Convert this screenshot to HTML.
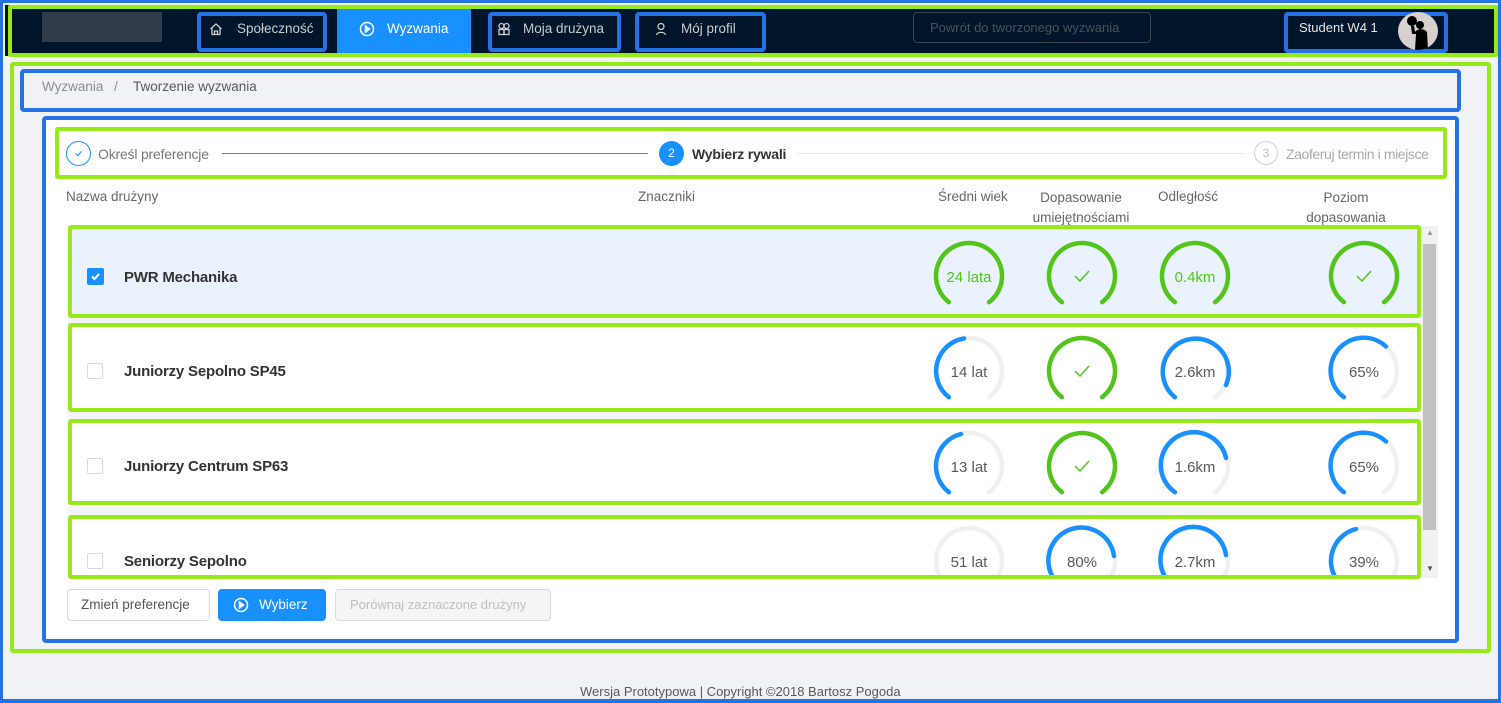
<!DOCTYPE html>
<html><head><meta charset="utf-8">
<style>
*{box-sizing:border-box;margin:0;padding:0}
body{width:1501px;height:703px;overflow:hidden;background:#f0f2f5;font-family:"Liberation Sans",sans-serif;font-size:13.5px;color:#595959;position:relative}
.a{position:absolute}
.g{position:absolute;border:4px solid #97ea1a;border-radius:3px}
.b{position:absolute;border:4px solid #2472e6;border-radius:4px}
.t{position:absolute;white-space:nowrap}
.nav{color:#c9ccd1;font-size:13.5px}
.row{position:absolute;left:68px;width:1354px;background:#fff}
.cb{position:absolute;left:87px;width:16px;height:16px;border:1px solid #d9d9d9;border-radius:2px;background:#fff}
.nm{position:absolute;left:124px;font-weight:bold;font-size:15px;color:#333;letter-spacing:-0.2px}
</style></head><body>
<div class="a" style="left:0;top:0;width:1501px;height:703px;border:3px solid #2472e6"></div>
<div class="a" style="left:5px;top:5px;width:1490px;height:51px;background:#001529"></div>
<div class="a" style="left:42px;top:12px;width:120px;height:30px;background:#303c4a"></div>
<div class="a" style="left:337px;top:5px;width:134px;height:51px;background:#1890ff"></div>
<div class="b" style="left:197px;top:12px;width:130px;height:40px"></div>
<div class="b" style="left:488px;top:12px;width:133px;height:40px"></div>
<div class="b" style="left:635px;top:12px;width:131px;height:40px"></div>
<svg class="a" style="left:209px;top:22px" width="14" height="14" viewBox="0 0 14 14" fill="none" stroke="#c9ccd1" stroke-width="1.3"><path d="M1.5 7 L7 2 L12.5 7 M3 6 V12.5 H11 V6 M5.5 12.5 V9 H8.5 V12.5"/></svg>
<div class="t nav" style="left:237px;top:21px">Społeczność</div>
<svg class="a" style="left:359px;top:21px" width="16" height="16" viewBox="0 0 16 16" fill="none" stroke="#fff" stroke-width="1.5"><circle cx="8" cy="8" r="6.5"/><path d="M6.5 5 L10.5 8 L6.5 11 Z" fill="#fff"/></svg>
<div class="t" style="left:387px;top:21px;color:#fff">Wyzwania</div>
<svg class="a" style="left:497px;top:22px" width="14" height="14" viewBox="0 0 14 14" fill="none" stroke="#c9ccd1" stroke-width="1.3"><circle cx="4.5" cy="4" r="2.5"/><circle cx="9.5" cy="4" r="2.5"/><rect x="2" y="7.5" width="5" height="5"/><rect x="7" y="7.5" width="5" height="5"/></svg>
<div class="t nav" style="left:523px;top:21px">Moja drużyna</div>
<svg class="a" style="left:654px;top:22px" width="14" height="14" viewBox="0 0 14 14" fill="none" stroke="#c9ccd1" stroke-width="1.3"><circle cx="7" cy="4.5" r="3"/><path d="M2.5 13 C3 9.5 11 9.5 11.5 13"/></svg>
<div class="t nav" style="left:681px;top:21px">Mój profil</div>
<div class="a" style="left:913px;top:12px;width:238px;height:31px;border:1px solid #3a4350;border-radius:4px"></div>
<div class="t" style="left:930px;top:20px;color:#4a525c;font-size:13px">Powrót do tworzonego wyzwania</div>
<div class="b" style="left:1284px;top:12px;width:164px;height:41px"></div>
<div class="t" style="left:1299px;top:20px;color:#e6e6e6;font-size:13px">Student W4 1</div>
<div class="a" style="left:1398px;top:12px;width:40px;height:38px;border-radius:50%;background:#d8d0cc;overflow:hidden">
<svg width="40" height="38" viewBox="0 0 40 38"><circle cx="14" cy="9" r="5" fill="#000"/><circle cx="22" cy="13" r="4" fill="#000"/><path d="M13 14 L14 22 L18 22 L17 38 L30 38 L29 20 Q27 17 22 17 Q18 18 17 20 L16 14 Z" fill="#000"/></svg></div>
<div class="g" style="left:8px;top:5px;width:1490px;height:52px;border-radius:2px"></div>

<div class="g" style="left:10px;top:62px;width:1481px;height:591px"></div>
<div class="b" style="left:20px;top:69px;width:1441px;height:43px"></div>
<div class="t" style="left:42px;top:79px;color:#8c8c8c">Wyzwania</div>
<div class="t" style="left:114px;top:79px;color:#8c8c8c">/</div>
<div class="t" style="left:133px;top:79px;color:#595959">Tworzenie wyzwania</div>

<div class="a" style="left:43px;top:117px;width:1415px;height:526px;background:#fff"></div>
<div class="b" style="left:42px;top:116px;width:1417px;height:527px"></div>

<div class="g" style="left:55px;top:127px;width:1392px;height:52px"></div>
<div class="a" style="left:66px;top:141px;width:25px;height:25px;border:1px solid #1890ff;border-radius:50%"></div>
<svg class="a" style="left:73px;top:148px" width="11" height="11" viewBox="0 0 13 13" fill="none" stroke="#1890ff" stroke-width="1.2"><path d="M3 6.5 L5.5 9 L10 4"/></svg>
<div class="t" style="left:98px;top:146px;font-size:14px;color:#777;letter-spacing:-0.2px">Określ preferencje</div>
<div class="a" style="left:222px;top:153px;width:426px;height:1px;background:#1890ff"></div>
<div class="a" style="left:659px;top:141px;width:25px;height:25px;background:#1890ff;border-radius:50%;color:#fff;font-size:12px;text-align:center;line-height:25px">2</div>
<div class="t" style="left:692px;top:146px;font-size:14px;font-weight:bold;color:#333;letter-spacing:-0.2px">Wybierz rywali</div>
<div class="a" style="left:797px;top:153px;width:448px;height:1px;background:#e8e8e8"></div>
<div class="a" style="left:1254px;top:141px;width:24px;height:24px;border:1px solid #d0d0d0;border-radius:50%;color:#bbb;font-size:12px;text-align:center;line-height:22px">3</div>
<div class="t" style="left:1286px;top:146px;font-size:14px;color:#aaa;letter-spacing:-0.4px">Zaoferuj termin i miejsce</div>

<div class="t" style="left:66px;top:189px;color:#666">Nazwa drużyny</div>
<div class="t" style="left:638px;top:189px;color:#666">Znaczniki</div>
<div class="t" style="left:938px;top:189px;color:#666">Średni wiek</div>
<div class="t" style="left:1022px;top:188px;width:118px;text-align:center;color:#666;line-height:20px">Dopasowanie<br>umiejętnościami</div>
<div class="t" style="left:1158px;top:189px;color:#666">Odległość</div>
<div class="t" style="left:1296px;top:188px;width:100px;text-align:center;color:#666;line-height:20px">Poziom<br>dopasowania</div>

<div class="a" style="left:68px;top:226px;width:1370px;height:352px;background:#f4f5f7;overflow:hidden">
 <div class="a" style="left:1354px;top:0;width:16px;height:352px;background:#f1f1f1"></div>
 <div class="a" style="left:1355px;top:18px;width:13px;height:286px;background:#c1c1c1"></div>
 <div class="t" style="left:1358px;top:2px;font-size:8px;color:#999">▲</div>
 <div class="t" style="left:1358px;top:338px;font-size:8px;color:#555">▼</div>
 <div class="row" style="left:0;top:2px;height:90px;background:#eaf2fd"></div>
 <div class="row" style="left:0;top:98px;height:88px"></div>
 <div class="row" style="left:0;top:193px;height:88px"></div>
 <div class="row" style="left:0;top:289px;height:80px"></div>
 <svg class="a" style="left:0;top:0" width="1354" height="352" viewBox="68 226 1354 352" font-family="Liberation Sans, sans-serif" font-size="15" text-anchor="middle">
  <defs><path id="arc" d="M-20.09 26.18 A33 33 0 1 1 20.09 26.18"/></defs>
  <g fill="none" stroke-width="4.5" stroke-linecap="round">
   <g stroke="#52c41a"><use href="#arc" x="969" y="276"/><use href="#arc" x="1082" y="276"/><use href="#arc" x="1195" y="276"/><use href="#arc" x="1364" y="276"/></g>
   <g stroke="#f0f0f0">
    <use href="#arc" x="969" y="371"/><use href="#arc" x="1195" y="371"/><use href="#arc" x="1364" y="371"/>
    <use href="#arc" x="969" y="466"/><use href="#arc" x="1195" y="466"/><use href="#arc" x="1364" y="466"/>
    <use href="#arc" x="969" y="561"/><use href="#arc" x="1082" y="561"/><use href="#arc" x="1195" y="561"/><use href="#arc" x="1364" y="561"/>
   </g>
   <g stroke="#52c41a"><use href="#arc" x="1082" y="371"/><use href="#arc" x="1082" y="466"/></g>
   <g stroke="#1890ff">
    <path d="M948.9 397.2 A33 33 0 0 1 964 338.5"/>
    <path d="M948.9 492.2 A33 33 0 0 1 961 434"/>
    <path d="M1174.9 397.2 A33 33 0 1 1 1226 385"/>
    <path d="M1174.9 492.2 A33 33 0 1 1 1226 458"/>
    <path d="M1174.9 587.2 A33 33 0 1 1 1226 555"/>
    <path d="M1343.9 397.2 A33 33 0 1 1 1386 346.5"/>
    <path d="M1343.9 492.2 A33 33 0 1 1 1386 441.5"/>
    <path d="M1343.9 587.2 A33 33 0 0 1 1356 529"/>
    <path d="M1061.9 587.2 A33 33 0 1 1 1114 556"/>
   </g>
   <g stroke="#52c41a" stroke-width="1.5" stroke-linecap="butt">
    <path d="M1075 276 L1080 281 L1089 271"/><path d="M1357 276 L1362 281 L1371 271"/>
    <path d="M1075 371 L1080 376 L1089 366"/><path d="M1075 466 L1080 471 L1089 461"/>
   </g>
  </g>
  <g fill="#52c41a"><text x="969" y="282">24 lata</text><text x="1195" y="282">0.4km</text></g>
  <g fill="#595959">
   <text x="969" y="377">14 lat</text><text x="1195" y="377">2.6km</text><text x="1364" y="377">65%</text>
   <text x="969" y="472">13 lat</text><text x="1195" y="472">1.6km</text><text x="1364" y="472">65%</text>
   <text x="969" y="567">51 lat</text><text x="1082" y="567">80%</text><text x="1195" y="567">2.7km</text><text x="1364" y="567">39%</text>
  </g>
 </svg>
</div>
<div class="g" style="left:68px;top:225px;width:1353px;height:93px"></div>
<div class="g" style="left:68px;top:323px;width:1353px;height:89px"></div>
<div class="g" style="left:68px;top:419px;width:1353px;height:86px"></div>
<div class="g" style="left:68px;top:515px;width:1353px;height:64px"></div>

<div class="a" style="left:87px;top:268px;width:17px;height:17px;background:#1890ff;border-radius:2px"></div>
<svg class="a" style="left:89px;top:270px" width="13" height="13" viewBox="0 0 13 13" fill="none" stroke="#fff" stroke-width="2"><path d="M3 6.5 L5.5 9 L10 4"/></svg>
<div class="nm" style="top:269px">PWR Mechanika</div>
<div class="cb" style="top:363px"></div><div class="nm" style="top:363px">Juniorzy Sepolno SP45</div>
<div class="cb" style="top:458px"></div><div class="nm" style="top:458px">Juniorzy Centrum SP63</div>
<div class="cb" style="top:553px"></div><div class="nm" style="top:553px">Seniorzy Sepolno</div>

<div class="a" style="left:67px;top:589px;width:143px;height:32px;border:1px solid #d9d9d9;border-radius:4px"></div>
<div class="t" style="left:81px;top:597px;color:#555">Zmień preferencje</div>
<div class="a" style="left:218px;top:589px;width:108px;height:32px;background:#1890ff;border-radius:4px"></div>
<svg class="a" style="left:233px;top:597px" width="16" height="16" viewBox="0 0 16 16" fill="none" stroke="#fff" stroke-width="1.5"><circle cx="8" cy="8" r="6.5"/><path d="M6.5 5 L10.5 8 L6.5 11 Z" fill="#fff"/></svg>
<div class="t" style="left:259px;top:597px;color:#fff">Wybierz</div>
<div class="a" style="left:335px;top:589px;width:216px;height:32px;border:1px solid #d9d9d9;border-radius:4px;background:#f5f5f5"></div>
<div class="t" style="left:350px;top:597px;color:#bfbfbf;font-size:13px">Porównaj zaznaczone drużyny</div>

<div class="t" style="left:580px;top:684px;color:#595959;font-size:13px">Wersja Prototypowa | Copyright ©2018 Bartosz Pogoda</div>
<div class="a" style="left:0;top:699px;width:1501px;height:4px;background:#2472e6"></div>
</body></html>
